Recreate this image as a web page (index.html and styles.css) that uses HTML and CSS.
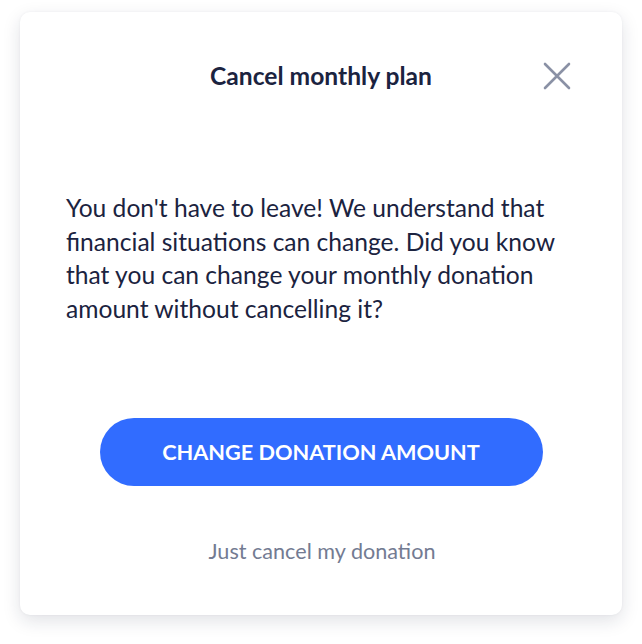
FILE: index.html
```html
<!DOCTYPE html>
<html lang="en">
<head>
<meta charset="utf-8">
<title>Cancel monthly plan</title>
<link rel="stylesheet" href="styles.css">
</head>
<body>
<div class="modal">
  <div class="modal-header">
    <span class="spacer"></span>
    <h1 class="title">Cancel monthly plan</h1>
    <button class="close" aria-label="Close">
      <svg width="28" height="28" viewBox="0 0 28 28" fill="none" stroke="#8a91a5" stroke-width="2.6" stroke-linecap="round"><path d="M2 2 L26 26 M26 2 L2 26"/></svg>
    </button>
  </div>
  <p class="message">You don't have to leave! We understand that financial situations can change. Did you know that you can change your monthly donation amount without cancelling it?</p>
  <button class="primary">CHANGE DONATION AMOUNT</button>
  <a class="link" href="#">Just cancel my donation</a>
</div>
</body>
</html>
```
FILE: styles.css
```css
* { box-sizing: border-box; }
html, body { margin: 0; padding: 0; background: #ffffff; }
body {
  font-family: Lato, "Noto Sans", sans-serif;
  padding: 12px 20px 29px 20px;
}
.modal {
  width: 602px;
  height: 603px;
  background: #fff;
  border-radius: 10px;
  box-shadow: 0 6px 18px rgba(20, 30, 60, 0.13), 0 0 3px rgba(20, 30, 60, 0.05);
  display: flex;
  flex-direction: column;
  align-items: center;
  padding: 50px 46px 0 46px;
}
.modal-header {
  width: 100%;
  display: grid;
  grid-template-columns: 60px 1fr 60px;
  align-items: center;
}
.title {
  margin: 0;
  font-size: 24.6px;
  font-weight: 700;
  color: #1b2340;
  text-align: center;
  line-height: 28px;
}
.close {
  justify-self: end;
  background: none;
  border: 0;
  padding: 0;
  width: 28px;
  height: 28px;
  margin-right: 5px;
  cursor: pointer;
  display: flex;
}
.message {
  margin: 101px 0 0 0;
  font-size: 24.6px;
  line-height: 33.5px;
  color: #1b2340;
}
.primary {
  margin-top: 93px;
  width: 443px;
  height: 68px;
  border: 0;
  border-radius: 34px;
  background: #316cff;
  color: #fff;
  font-family: Lato, "Noto Sans", sans-serif;
  font-weight: 700;
  font-size: 21.7px;
  cursor: pointer;
}
.link {
  margin-top: 52px;
  margin-left: 2px;
  font-size: 21.6px;
  color: #737b92;
  text-decoration: none;
}
```
